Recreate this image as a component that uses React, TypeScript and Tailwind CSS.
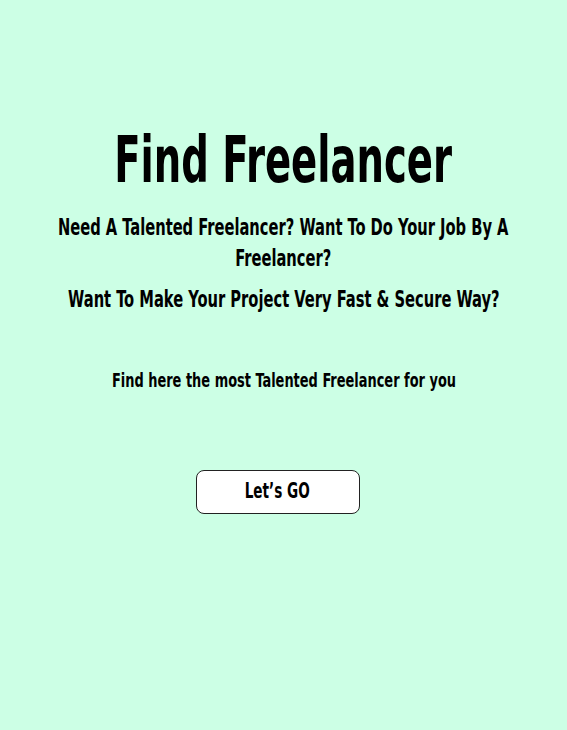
export default function App() {
  return (
    <div className="min-h-[730px] w-full overflow-hidden bg-[#ccffe5] font-['DejaVu_Sans_Condensed',sans-serif] text-black">
      <div className="flex flex-col items-center pt-[125px] text-center">
        <h1 className="scale-x-[0.67] whitespace-nowrap text-[64px] font-bold leading-[70px]">
          Find Freelancer
        </h1>
        <p className="mt-[17px] scale-x-[0.71] whitespace-nowrap text-[23px] font-bold leading-[31px]">
          Need A Talented Freelancer? Want To Do Your Job By A
          <br />
          Freelancer?
        </p>
        <p className="mt-[10px] scale-x-[0.71] whitespace-nowrap text-[23px] font-bold leading-[31px]">
          Want To Make Your Project Very Fast &amp; Secure Way?
        </p>
        <p className="mt-[51px] scale-x-[0.72] whitespace-nowrap text-[20px] font-bold leading-[28px]">
          Find here the most Talented Freelancer for you
        </p>
        <button className="mt-[76px] mr-3 flex h-[44px] w-[164px] items-center justify-center rounded-lg border border-[#222] bg-white">
          <span className="scale-x-[0.72] whitespace-nowrap text-[21px] font-bold">Let’s GO</span>
        </button>
      </div>
    </div>
  );
}
